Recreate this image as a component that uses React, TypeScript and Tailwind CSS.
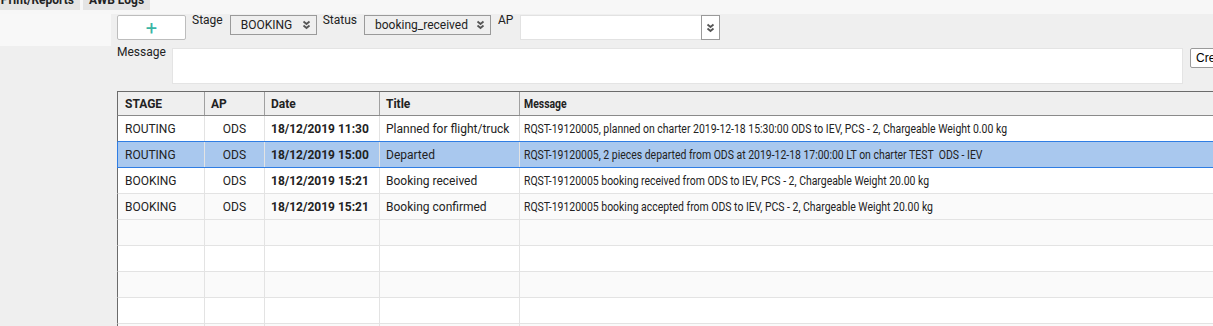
import React from "react";

type Row = {
  stage: string;
  ap: string;
  date: string;
  title: string;
  message: string;
};

const rows: Row[] = [
  {
    stage: "ROUTING",
    ap: "ODS",
    date: "18/12/2019 11:30",
    title: "Planned for flight/truck",
    message:
      "RQST-19120005, planned on charter 2019-12-18 15:30:00 ODS to IEV, PCS - 2, Chargeable Weight 0.00 kg",
  },
  {
    stage: "ROUTING",
    ap: "ODS",
    date: "18/12/2019 15:00",
    title: "Departed",
    message:
      "RQST-19120005, 2 pieces departed from ODS at 2019-12-18 17:00:00 LT on charter TEST\u00a0 ODS - IEV",
  },
  {
    stage: "BOOKING",
    ap: "ODS",
    date: "18/12/2019 15:21",
    title: "Booking received",
    message:
      "RQST-19120005 booking received from ODS to IEV, PCS - 2, Chargeable Weight 20.00 kg",
  },
  {
    stage: "BOOKING",
    ap: "ODS",
    date: "18/12/2019 15:21",
    title: "Booking confirmed",
    message:
      "RQST-19120005 booking accepted from ODS to IEV, PCS - 2, Chargeable Weight 20.00 kg",
  },
];

const selectedIndex = 1;

function Chevrons() {
  return (
    <svg width="9" height="10" viewBox="0 0 9 10" fill="none">
      <path d="M1.5 1.5 L4.5 4 L7.5 1.5" stroke="#555" strokeWidth="1.8" />
      <path d="M1.5 5.5 L4.5 8 L7.5 5.5" stroke="#555" strokeWidth="1.8" />
    </svg>
  );
}

function Select({ value, width }: { value: string; width: string }) {
  return (
    <div
      className={`${width} shrink-0 h-[20px] flex items-center justify-between pl-[10px] pr-[5px] border border-[#9a9a9a] bg-[#efefef] text-[12px] text-[#222]`}
    >
      <span>{value}</span>
      <Chevrons />
    </div>
  );
}

export default function App() {
  const emptyRows = [0, 1, 2, 3, 4];

  return (
    <div
      className="w-[1213px] h-[326px] overflow-hidden bg-[#efefef] text-[#222]"
      style={{ fontFamily: "Roboto, 'Liberation Sans', sans-serif" }}
    >
      {/* tab strip */}
      <div className="h-[14px] bg-[#f7f7f7] overflow-hidden">
        <div className="flex gap-[3px] -mt-[10px]">
          <div className="w-[80px] h-[20px] bg-[#e4e4e4] flex items-center justify-end pr-[6px] text-[12px] font-bold whitespace-nowrap">
            Print/Reports
          </div>
          <div className="w-[67px] h-[20px] bg-[#e4e4e4] flex items-center justify-center text-[12px] font-bold whitespace-nowrap">
            AWB Logs
          </div>
        </div>
      </div>

      <div className="flex">
        <div className="w-[111px] shrink-0">
          <div className="h-[32px] bg-[#f8f8f8]" />
        </div>

        <div className="flex-1 pl-[6px] pt-[1px] min-w-0">
          {/* filter row */}
          <div className="flex items-start h-[33px]">
            <button className="w-[69px] shrink-0 h-[25px] bg-white border border-[#bdbdbd] rounded-[2px] flex items-center justify-center text-[20px] leading-none text-[#3ab5a5]">
              +
            </button>
            <span className="ml-[6px] text-[12px] leading-[14px] mt-[-2px] mr-[7px]">Stage</span>
            <Select value="BOOKING" width="w-[87px]" />
            <span className="ml-[6px] text-[12px] leading-[14px] mt-[-2px] mr-[7px]">Status</span>
            <Select value="booking_received" width="w-[127px]" />
            <span className="ml-[7px] text-[12px] leading-[14px] mt-[-2px] mr-[7px]">AP</span>
            <div className="w-[200px] shrink-0 h-[25px] bg-white border border-[#e2e2e2] flex justify-end">
              <div className="w-[19px] h-[25px] -mt-px -mr-px border border-[#9a9a9a] flex items-center justify-center">
                <Chevrons />
              </div>
            </div>
          </div>

          {/* message row */}
          <div className="flex items-start">
            <span className="text-[12px] leading-[14px] mt-[-3px] w-[55px] shrink-0">Message</span>
            <div className="w-[1011px] shrink-0 h-[36px] bg-white border border-[#e4e4e4]" />
            <button
              className="ml-[7px] shrink-0 h-[20px] px-[5px] bg-white border border-[#9a9a9a] rounded-[2px] text-[12px] text-black whitespace-nowrap"
              style={{ fontFamily: "'Liberation Sans', Arial, sans-serif" }}
            >
              Create
            </button>
          </div>

          {/* table */}
          <div className="mt-[7px] w-[1110px] border-t border-[#6b6b6b] bg-white text-[12px]">
            <div className="flex h-[24px] bg-[#efefef] border-l border-b border-l-[#6b6b6b] border-b-[#8a8a8a] font-bold">
              <div className="w-[87px] px-[7px] flex items-center border-r border-[#a0a0a0]">STAGE</div>
              <div className="w-[60px] px-[6px] flex items-center border-r border-[#a0a0a0]">AP</div>
              <div className="w-[115px] px-[6px] flex items-center border-r border-[#a0a0a0]">Date</div>
              <div className="w-[140px] px-[6px] flex items-center border-r border-[#a0a0a0]">Title</div>
              <div className="flex-1 px-[4px] flex items-center">
                <span className="inline-block origin-left scale-x-[0.87]">Message</span>
              </div>
            </div>

            {rows.map((r, i) => {
              const selected = i === selectedIndex;
              const blueBottom = selected || i === selectedIndex - 1;
              return (
                <div
                  key={i}
                  className={`flex h-[26px] border-l border-b ${
                    selected ? "bg-[#a9c8ee] border-l-[#2f7de3]" : i % 2 === 1 ? "bg-[#fafafa] border-l-[#6b6b6b]" : "bg-white border-l-[#6b6b6b]"
                  } ${blueBottom ? "border-b-[#2f7de3]" : "border-b-[#e3e3e3]"}`}
                >
                  <div className="w-[87px] px-[7px] flex items-center border-r border-[#e3e3e3]">{r.stage}</div>
                  <div className="w-[60px] flex items-center justify-center border-r border-[#e3e3e3]">{r.ap}</div>
                  <div className="w-[115px] px-[6px] flex items-center border-r border-[#e3e3e3] font-bold">{r.date}</div>
                  <div className="w-[140px] px-[6px] flex items-center border-r border-[#e3e3e3] whitespace-nowrap">{r.title}</div>
                  <div className="flex-1 px-[4px] flex items-center whitespace-nowrap">
                    <span className="inline-block origin-left scale-x-[0.87]">{r.message}</span>
                  </div>
                </div>
              );
            })}

            {emptyRows.map((n) => (
              <div
                key={n}
                className={`flex h-[26px] border-l border-b border-l-[#6b6b6b] border-b-[#e3e3e3] ${n % 2 === 1 ? "bg-white" : "bg-[#fafafa]"}`}
              >
                <div className="w-[87px] border-r border-[#e3e3e3]" />
                <div className="w-[60px] border-r border-[#e3e3e3]" />
                <div className="w-[115px] border-r border-[#e3e3e3]" />
                <div className="w-[140px] border-r border-[#e3e3e3]" />
                <div className="flex-1" />
              </div>
            ))}
          </div>
        </div>
      </div>
    </div>
  );
}
